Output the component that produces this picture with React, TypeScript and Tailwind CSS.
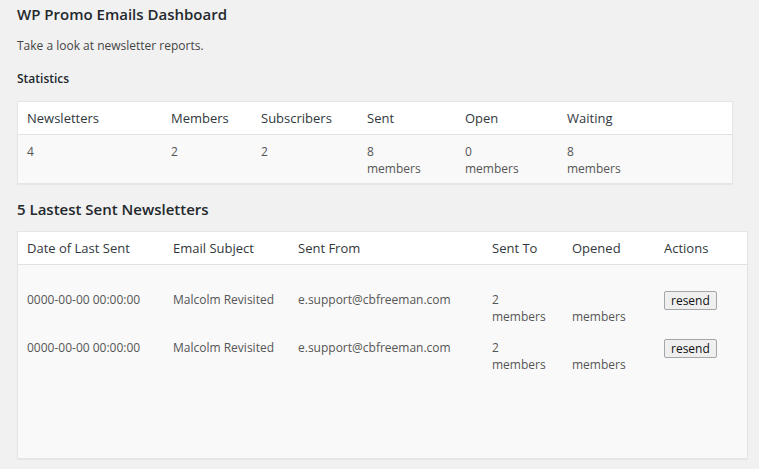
const stats = [
  { label: "Newsletters", value: "4", unit: "" },
  { label: "Members", value: "2", unit: "" },
  { label: "Subscribers", value: "2", unit: "" },
  { label: "Sent", value: "8", unit: "members" },
  { label: "Open", value: "0", unit: "members" },
  { label: "Waiting", value: "8", unit: "members" },
];

const sent = [
  { date: "0000-00-00 00:00:00", subject: "Malcolm Revisited", from: "e.support@cbfreeman.com", to: "2", opened: "" },
  { date: "0000-00-00 00:00:00", subject: "Malcolm Revisited", from: "e.support@cbfreeman.com", to: "2", opened: "" },
];

const statCols = "grid grid-cols-[144px_90px_106px_98px_102px_1fr]";
const sentCols = "grid grid-cols-[146px_125px_194px_80px_92px_1fr]";

export default function App() {
  return (
    <div className="min-h-screen bg-[#f1f1f1] px-[17px] pt-[4px] font-['Open_Sans',sans-serif] text-[12px] text-[#444]">
      <h2 className="text-[15px] font-semibold leading-[20px] text-[#23282d]">
        WP Promo Emails Dashboard
      </h2>
      <p className="mt-[12px] leading-[20px]">Take a look at newsletter reports.</p>
      <h3 className="mt-[13px] font-semibold leading-[20px] text-[#23282d]">Statistics</h3>

      {/* stats table */}
      <div className="mt-[12px] w-[716px] border border-[#e5e5e5] bg-[#f9f9f9] shadow-[0_1px_1px_rgba(0,0,0,0.04)]">
        <div className={`${statCols} h-[33px] items-center border-b border-[#e1e1e1] bg-white pt-[2px] text-[13px] text-[#32373c]`}>
          {stats.map((s) => (
            <div key={s.label} className="px-[9px]">
              {s.label}
            </div>
          ))}
        </div>
        <div className={`${statCols} pt-[8px] pb-[6px] leading-[17px] text-[#555]`}>
          {stats.map((s) => (
            <div key={s.label} className="px-[9px]">
              <div>{s.value}</div>
              <div className="h-[17px]">{s.unit}</div>
            </div>
          ))}
        </div>
      </div>

      <h2 className="mt-[15px] text-[15px] font-semibold leading-[20px] text-[#23282d]">
        5 Lastest Sent Newsletters
      </h2>

      {/* latest sent table */}
      <div className="mt-[12px] flex h-[228px] w-[731px] flex-col border border-[#e5e5e5] bg-[#f9f9f9] shadow-[0_1px_1px_rgba(0,0,0,0.04)]">
        <div className={`${sentCols} h-[33px] shrink-0 items-center border-b border-[#e1e1e1] bg-white pt-[2px] text-[13px] text-[#32373c]`}>
          <div className="px-[9px]">Date of Last Sent</div>
          <div className="px-[9px]">Email Subject</div>
          <div className="px-[9px]">Sent From</div>
          <div className="px-[9px]">Sent To</div>
          <div className="px-[9px]">Opened</div>
          <div className="px-[9px]">Actions</div>
        </div>
        <div className="flex-1 pt-[19px] leading-[17px] text-[#555]">
          {sent.map((r, i) => (
            <div key={i} className={`${sentCols} py-[7px]`}>
              <div className="px-[9px]">{r.date}</div>
              <div className="px-[9px]">{r.subject}</div>
              <div className="px-[9px]">{r.from}</div>
              <div className="px-[9px]">
                <div>{r.to}</div>
                <div>members</div>
              </div>
              <div className="px-[9px]">
                <div className="h-[17px]">{r.opened}</div>
                <div>members</div>
              </div>
              <div className="px-[9px]">
                <button className="h-[19px] rounded-[2px] border border-[#a6a6a6] bg-[#efefef] px-[6px] text-[12px] leading-[16px] text-[#111]">
                  resend
                </button>
              </div>
            </div>
          ))}
        </div>
      </div>
    </div>
  );
}
